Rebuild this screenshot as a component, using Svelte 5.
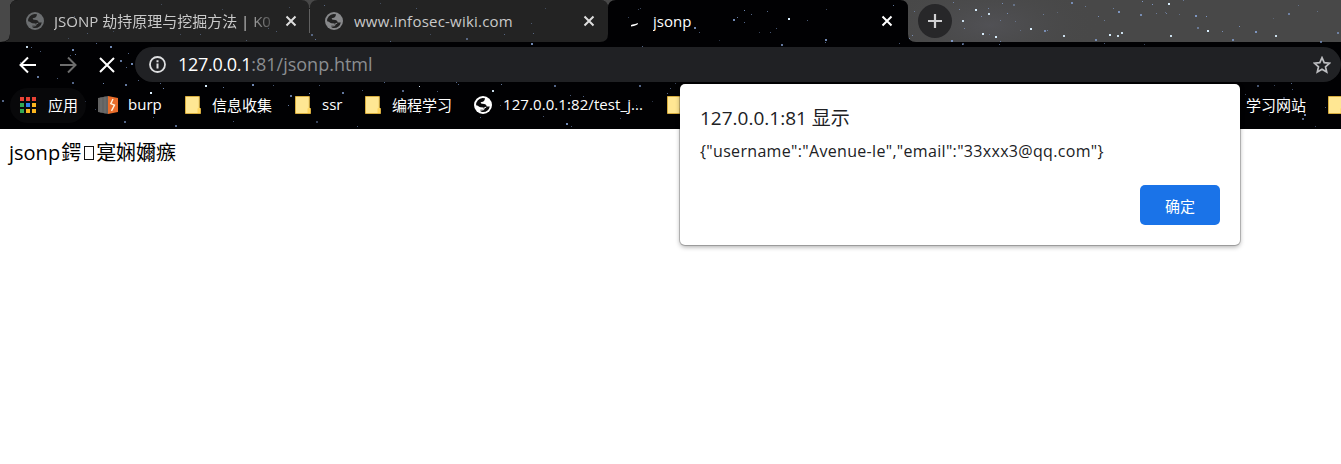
<script>
  const stars = [
    [26,46,2,.9],[40,51,1,.5],[31,47,1,.6],[72,49,2,.8],[75,54,1,.7],[70,55,1,.5],[96,43,1,.6],[110,46,2,.8],[120,60,2,.7],[128,53,1,.6],[131,63,2,.8],[126,67,1,.6],[20,62,1,.5],[37,76,2,.7],[57,78,1,.5],[72,82,2,.6],[103,83,1,.8],[125,84,2,.7],[138,80,1,.6],[150,92,2,1],[160,83,1,.6],[163,88,1,.8],[205,85,2,1],[223,87,1,.7],[252,84,2,.8],[273,85,1,.5],[2,100,2,.6],[85,101,1,.5],[51,117,1,.4],[95,109,1,.4],[124,121,2,.6],[153,117,1,.5],[175,125,2,.6],[233,121,1,.5],[260,113,1,.5],[288,105,1,.7],[290,95,2,.7],
    [74,16,1,.4],[113,31,1,.3],[68,38,1,.3],[87,33,1,.4],[161,4,1,.3],[180,34,1,.3],[200,34,1,.4],[222,9,1,.3],[246,40,1,.4],[268,28,1,.4],[276,31,1,.4],[289,7,1,.3],[311,34,2,.5],[315,39,1,.6],[324,5,1,.5],[380,3,1,.3],[416,8,1,.4],[430,34,1,.3],[466,38,2,.5],[504,34,1,.5],[531,23,1,.4],[533,33,1,.5],[545,8,1,.3],[390,41,1,.5],[531,43,2,.8],
    [309,93,1,.8],[319,85,1,.5],[342,92,2,.7],[362,90,1,.5],[384,82,1,.6],[402,90,2,.6],[419,86,1,1],[437,91,1,.5],[456,82,1,.6],[458,84,1,.6],[492,90,2,.9],[501,84,1,.7],[554,85,2,.6],[570,95,1,.5],[583,96,1,.6],[598,101,1,.6],[410,102,1,.5],[335,109,1,.4],[419,113,1,.5],[357,126,1,.5],[316,121,2,.4],[480,117,1,.5],[500,105,1,.5],[543,116,1,.5],[566,123,2,.8],[571,126,1,.5],[620,118,1,.4],[636,105,1,.5],[639,85,2,.6],[652,101,1,.3],[667,93,1,.6],[670,88,1,.5],[675,83,1,.4],
    [628,17,1,.4],[638,9,1,.4],[640,8,1,.4],[694,27,2,.8],[699,32,1,.5],[733,19,2,.8],[737,17,1,.7],[744,10,1,.8],[744,22,1,.6],[751,14,1,.6],[767,11,1,.6],[770,32,1,.5],[776,28,1,.5],[788,18,2,1],[807,20,1,.5],[825,39,2,.8],[825,42,1,.6],[826,9,1,.4],[781,44,2,.7],[759,32,1,.4],[719,40,1,.3],[642,46,1,.6],[893,5,1,.7],[899,43,1,.5],
    [914,11,1,.5],[912,35,1,.7],[909,38,1,.6],[920,22,1,.4],[953,2,1,.6],[975,9,2,1],[981,16,1,.6],[988,13,2,.9],[988,8,1,.6],[962,20,2,.9],[964,28,1,.6],[959,9,1,.6],[951,40,2,.8],[962,43,2,.5],[982,33,2,1],[989,34,1,.4],[995,36,2,1],[1002,3,1,.7],[1007,13,1,.7],[1013,4,2,.4],[1015,21,1,.4],[1000,41,1,.6],[1000,20,1,.5],[1020,30,1,.4],[1030,28,2,1],[1043,14,1,.5],[1044,30,2,.7],[1047,30,1,.6],[1057,12,1,.3],[1071,2,2,.7],[1085,6,1,.5],[1063,35,2,.9],[1095,39,2,.7],[1098,16,1,.7],[1104,20,1,.5],[1109,34,2,1],[1117,35,2,.9],[1121,32,2,.9],[1113,8,1,.6],[1118,11,2,.8],[1140,14,2,.7],[1142,1,1,.8],[1152,4,1,.8],[1156,13,1,.5],[1166,13,1,.6],[1168,3,2,1],[1165,12,1,.4],[1170,35,2,.9],[1179,14,1,.4],[1183,0,1,.5],[1195,15,2,.8],[1197,27,2,.5],[1206,16,1,.8],[1207,30,2,1],[1222,31,1,.7],[1232,39,2,.7],[1239,26,1,.7],[1255,31,2,.8],[1275,35,2,.9],[1273,18,1,.3],[1288,13,2,.6],[1298,5,1,.4],[1320,41,2,.6],[1317,11,1,.4],[1337,32,2,.6],
    [962,44,1,.5],[999,44,1,.6],[1104,43,1,.5],[1144,44,1,.4],[1257,85,2,.5],[1274,85,1,.4],[1291,83,1,.6],[1292,89,1,.5],[1283,97,2,.4],[1245,94,1,.4],[1304,114,2,.8],[1302,118,2,.6],[1315,126,1,.4],[1325,107,1,.5],[1269,115,1,.3]
  ];
  const apps = ['#e94235','#e94235','#e94235','#34a853','#2f7de9','#fbb51e','#34a853','#fbb51e','#fbb51e'];
</script>

{#snippet globe(color, hole)}
  <svg class="globe" viewBox="0 0 18 18" aria-hidden="true">
    <circle cx="9" cy="9" r="9" fill={color} />
    <path d="M8.5 2 11 2.3C10.8 4.7 9.7 6 7.6 6.1 6.2 6.2 6.5 7.6 7.8 7.7 10.9 7.5 12.8 8.8 12.7 10.5H15.8A7 7 0 0 1 9 16C7.6 16 6.9 15.6 6.5 15.3L6.6 13.6 9.6 13.2V11.6L6.5 11.3C4.5 10.8 3.8 9.2 2.1 9.2A7 7 0 0 1 8.5 2Z" fill={hole} />
    <path d="M6.7 14.1 9.7 13.7 10.3 11.8 12.2 11.2" stroke={color} fill="none" />
  </svg>
{/snippet}
{#snippet cross()}
  <svg class="cross" viewBox="0 0 12 12" aria-hidden="true"><path d="m1.5 1.5 9 9m0-9-9 9" fill="none" stroke="currentColor" stroke-width="2" /></svg>
{/snippet}
{#snippet folder()}
  <svg class="folder" viewBox="0 0 16 18" aria-hidden="true">
    <path d="M.5.5h13.8v11l1.2 1v5H.5Z" fill="#ffe793" stroke="#d8ad3d" />
    <path d="M12.5 17v-4.5l1.5-1 1 1.5V17Z" fill="#ffd65e" />
  </svg>
{/snippet}

<div class="window">
  <header class="chrome">
    <svg class="sky" viewBox="0 0 1341 129" aria-hidden="true">
      <defs>
        <radialGradient id="haze"><stop offset="0" stop-color="#5a5a62" stop-opacity=".5" /><stop offset="1" stop-color="#484848" stop-opacity="0" /></radialGradient>
        <clipPath id="strip"><path d="M908 0H1341V42H916Q908 42 908 34Z" /></clipPath>
      </defs>
      <rect width="1341" height="129" fill="#010103" />
      <path d="M0 0H18Q10 0 10 8V34Q10 42 0 42Z" fill="#484848" />
      <path d="M10 8Q10 0 18 0H600Q608 0 608 8V34Q608 42 600 42H2Q10 42 10 34Z" fill="#232323" />
      <path d="M301 0H318Q310 0 310 8H309Q309 0 301 0M600 0H616Q608 0 608 8Q608 0 600 0M900 0H1341V42H916Q908 42 908 34V8Q908 0 900 0" fill="#484848" />
      <ellipse cx="990" cy="25" rx="110" ry="48" fill="url(#haze)" clip-path="url(#strip)" />
      {#each stars as [x, y, s, o]}
        <rect {x} {y} width={s} height={s} fill={o > .8 ? '#d8edfc' : '#8ba9df'} opacity={o} />
      {/each}
      <path d="M309.5 9V33" stroke="#606060" />
    </svg>

    <div class="tabs">
      <div class="tab first">
        {@render globe('#6b6e70', '#232323')}
        <span class="title">{'JSONP 劫持原理与挖掘方法 | K0'}</span>
        {@render cross()}
      </div>
      <div class="tab">
        {@render globe('#88898b', '#232323')}
        <span class="title wiki">www.infosec-wiki.com</span>
        {@render cross()}
      </div>
      <div class="tab active">
        <svg class="globe" viewBox="0 0 18 18" aria-hidden="true"><path d="M5 15.4Q4.4 13.4 6.4 13.4 9.2 13.2 12 11.9 12.2 13.3 10.5 14.1 8 15.3 5 15.4Z" transform="translate(1 -6) translate(0 5)" fill="#fff" /></svg>
        <span class="title">jsonp</span>
        {@render cross()}
      </div>
      <div class="plus"><svg width="16" height="16" viewBox="0 0 16 16" aria-hidden="true"><path d="M8 1v14M1 8h14" stroke="#d0d0d2" stroke-width="2.2" /></svg></div>
    </div>

    <div class="nav">
      <svg width="18" height="18" viewBox="0 0 18 18" aria-hidden="true"><path d="M17 9H2M9 1.5 1.5 9 9 16.5" fill="none" stroke="#fff" stroke-width="2" /></svg>
      <svg class="forward" width="18" height="18" viewBox="0 0 18 18" aria-hidden="true"><path d="M1 9H16M9 1.5 16.5 9 9 16.5" fill="none" stroke="#6d6d6d" stroke-width="2" /></svg>
      <svg class="stop" width="16" height="16" viewBox="0 0 16 16" aria-hidden="true"><path d="m1 1 14 14M15 1 1 15" fill="none" stroke="#fff" stroke-width="2" /></svg>
      <div class="address">
        <svg width="17" height="17" viewBox="0 0 17 17" aria-hidden="true"><circle cx="8.5" cy="8.5" r="7.5" fill="none" stroke="#dedfe1" stroke-width="1.8" /><path d="M8.5 7.5v5M8.5 4.2v2" stroke="#dedfe1" stroke-width="2" /></svg>
        <span class="url"><b>127.0.0.1</b>:81/jsonp.html</span>
        <svg class="star" width="18" height="18" viewBox="0 0 18 18" aria-hidden="true"><path d="m9 1.7 2.2 5 5.4.5-4.1 3.6 1.2 5.3L9 13.3l-4.7 2.8 1.2-5.3-4.1-3.6 5.4-.5Z" fill="none" stroke="#bdbec1" stroke-width="1.7" /></svg>
      </div>
    </div>

    <div class="bookmarks">
      <div class="apps"><div class="grid">{#each apps as color}<i style="background:{color}"></i>{/each}</div><span>应用</span></div>
      <div class="mark burpmark">
        <svg width="21" height="18" viewBox="0 0 21 18" aria-hidden="true"><path d="M0 2 10 0V18L0 16Z" fill="#626262" /><path d="M3 1.4V16.6M7 .6V17.4" stroke="#707070" /><path d="M10 0 20 2V16L10 18Z" fill="#e96d2b" /><path d="m15 3-2.2 4.6 3.7 1.6-3 5.6" fill="none" stroke="#fff3dd" stroke-width="1.4" /></svg>
        <span class="burp">burp</span>
      </div>
      <div class="mark info">{@render folder()}<span>信息收集</span></div>
      <div class="mark ssr">{@render folder()}<span>ssr</span></div>
      <div class="mark code">{@render folder()}<span>编程学习</span></div>
      <div class="mark test">{@render globe('#fff', '#08080a')}<span>127.0.0.1:82/test_j...</span></div>
      <div class="mark hidden">{@render folder()}</div>
      <div class="mark study"><span>学习网站</span>{@render folder()}</div>
    </div>
  </header>

  <main>jsonp<span class="han">鍔<i class="missing"></i>寔娴嬭瘯</span></main>

  <div class="dialog" role="dialog" aria-labelledby="heading">
    <div class="heading" id="heading">127.0.0.1:81 <span>显示</span></div>
    <div class="message">{'{"username":"Avenue-le","email":"33xxx3@qq.com"}'}</div>
    <button>确定</button>
  </div>
</div>

<style>
  :global(body) { margin: 0; background: #fff; }
  .window { position: relative; width: 1341px; height: 464px; overflow: hidden; font-family: "Open Sans", "Noto Sans CJK SC", sans-serif; font-size: 15px; color: #000; }
  .window * { box-sizing: border-box; }
  .chrome { position: relative; height: 129px; isolation: isolate; }
  svg { display: block; flex: none; }
  .sky { position: absolute; inset: 0; width: 1341px; height: 129px; z-index: -1; }
  .tabs { height: 42px; padding-left: 10px; display: flex; }
  .tab { width: 299px; height: 42px; padding: 0 13px 0 16px; display: flex; align-items: center; color: #c9c9c9; }
  .tab.first { padding-right: 12px; }
  .tab.active { color: #fff; padding: 0 15px 0 17px; width: 300px; }
  .globe { width: 18px; height: 18px; }
  .title { margin-left: 10px; flex: 1; overflow: hidden; white-space: nowrap; line-height: 24px; }
  .wiki { letter-spacing: .22px; margin-left: 11px; }
  .first .title { margin-right: 2px; mask-image: linear-gradient(to right, #000 190px, transparent 228px); }
  .cross { width: 12px; height: 12px; margin-left: 8px; color: #dedede; }
  .active .cross { color: #fff; }
  .plus { width: 34px; height: 34px; margin: 4px 0 0 10px; border-radius: 50%; background: #272729; display: grid; place-items: center; }
  .nav { height: 45px; padding: 5px 0 5px 19px; display: flex; align-items: center; }
  .forward { margin-left: 22px; }
  .stop { margin-left: 22px; }
  .address { margin-left: 20px; flex: 1; height: 35px; border-radius: 18px; background: #202124; display: flex; align-items: center; padding: 0 10px 0 14px; }
  .url { margin-left: 12px; margin-top: -2px; flex: 1; color: #8b8e91; font-size: 18px; line-height: 26px; white-space: nowrap; }
  .url b { color: #fff; font-weight: 400; letter-spacing: -.3px; }
  .bookmarks { height: 42px; padding: 0 0 6px 10px; display: flex; align-items: center; color: #fff; white-space: nowrap; overflow: hidden; }
  .bookmarks span { margin-top: -2px; }
  .apps { width: 76px; height: 35px; border-radius: 18px; background: #08080a; display: flex; align-items: center; padding-left: 10px; gap: 12px; flex: none; }
  .grid { display: grid; grid-template-columns: repeat(3, 4px); gap: 2px; }
  .grid i { width: 4px; height: 4px; }
  .mark { display: flex; align-items: center; flex: none; gap: 11px; height: 36px; }
  .folder { width: 16px; height: 18px; }
  .burpmark { margin-left: 12px; width: 87px; gap: 9px; }
  .info { width: 110px; }
  .ssr { width: 70px; }
  .code { width: 109px; }
  .test { width: 193px; letter-spacing: .08px; }
  .hidden { width: 579px; }
  .study { gap: 22px; }
  main { padding: 10px 9px; font-size: 20px; line-height: 28px; display: flex; align-items: center; }
  .han { display: flex; align-items: center; margin-left: 1px; }
  .missing { display: block; width: 10px; height: 14px; margin: 0 2px 0 3px; border: 1px solid #111; }
  .dialog { position: absolute; left: 680px; top: 84px; width: 560px; height: 161px; padding: 20px; background: #fff; border-radius: 5px; box-shadow: 0 0 0 1px #0003, 0 2px 5px #0005; display: flex; flex-direction: column; color: #202124; }
  .heading { font-size: 19px; line-height: 28px; }
  .message { margin-top: 6px; line-height: 26px; font-size: 16px; letter-spacing: .32px; white-space: nowrap; }
  button { align-self: flex-end; margin-top: auto; width: 80px; height: 40px; padding: 0; border: 0; border-radius: 5px; background: #1a73e8; color: #fff; font: 15px "Noto Sans CJK SC", sans-serif; }
</style>
